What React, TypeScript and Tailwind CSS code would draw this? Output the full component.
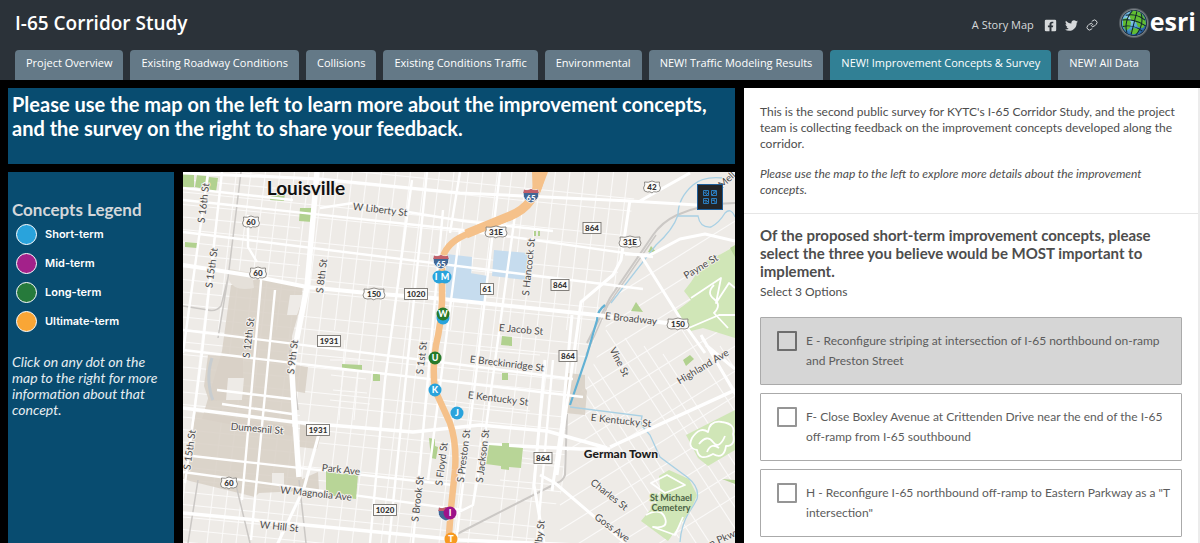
import React from "react";
import { FaFacebookSquare, FaTwitter } from "react-icons/fa";
import { Link as LinkIcon } from "lucide-react";

const tabs = [
  "Project Overview",
  "Existing Roadway Conditions",
  "Collisions",
  "Existing Conditions Traffic",
  "Environmental",
  "NEW! Traffic Modeling Results",
  "NEW! Improvement Concepts & Survey",
  "NEW! All Data",
];

const legend = [
  { label: "Short-term", color: "bg-[#29a3dc]" },
  { label: "Mid-term", color: "bg-[#a3218a]" },
  { label: "Long-term", color: "bg-[#267a3b]" },
  { label: "Ultimate-term", color: "bg-[#f9a636]" },
];

const options = [
  { id: "e", text: "E - Reconfigure striping at intersection of I-65 northbound on-ramp and Preston Street", hovered: true },
  { id: "f", text: "F- Close Boxley Avenue at Crittenden Drive near the end of the I-65 off-ramp from I-65 southbound", hovered: false },
  { id: "h", text: 'H - Reconfigure I-65 northbound off-ramp to Eastern Parkway as a "T intersection"', hovered: false },
];

function Globe() {
  return (
    <svg viewBox="0 0 32 32" className="size-8" aria-hidden="true">
      <defs>
        <radialGradient id="halo">
          <stop offset="0.78" stopColor="#c9cfd3" stopOpacity="0.85" />
          <stop offset="1" stopColor="#c9cfd3" stopOpacity="0" />
        </radialGradient>
        <radialGradient id="sea" cx="0.35" cy="0.3" r="0.8">
          <stop offset="0" stopColor="#a5dcf2" />
          <stop offset="0.55" stopColor="#4a9fd6" />
          <stop offset="1" stopColor="#1f4f94" />
        </radialGradient>
      </defs>
      <circle cx="16" cy="16" r="15.500" fill="url(#halo)" />
      <circle cx="16" cy="16" r="13" fill="#0e2130" />
      <circle cx="16" cy="16" r="12.200" fill="url(#sea)" />
      <path d="M14 4c5-1 11 2 13 8l1 5-3 4-5-1-2-5-5-2-2-5zM5 12l4-1 4 4-1 6-4 3-3-5zM15 21l6 1-1 4-5 1.500-3-3z" fill="#62bd32" />
      <g fill="none" stroke="#0e2130" strokeWidth="1" transform="rotate(14 16 16)">
        <path d="M6 10.500c6-3 14-3 20 0M4 16c7-3 17-3 24 0M6 22c6-3 14-3 20 0" />
        <path d="M16 4v24M11.500 5c-4 6-4 16 0 22M20.500 5c4 6 4 16 0 22" />
      </g>
    </svg>
  );
}

const minorH = Array.from({ length: 34 }, (_, i) => 142 + i * 12.500);
const minorV = Array.from({ length: 30 }, (_, i) => 196 + i * 14.500);

const streets: [string, number, number, number][] = [
  ["W Liberty St", 380, 210, 7],
  ["S 16th St", 204, 203, -83],
  ["S 15th St", 212, 268, -82],
  ["S 8th St", 322, 276, -83],
  ["S 12th St", 249, 338, -83],
  ["S 9th St", 293, 357, -83],
  ["S 15th St", 190, 450, -82],
  ["S 1st St", 422, 358, -83],
  ["S Hancock St", 529, 267, -84],
  ["E Jacob St", 521, 330, 5],
  ["E Breckinridge St", 507, 364, 7],
  ["E Kentucky St", 498, 399, 7],
  ["E Kentucky St", 621, 421, 6],
  ["E Broadway", 631, 319, 6],
  ["Payne St", 701, 267, -31],
  ["Highland Ave", 703, 367, -31],
  ["Vine St", 619, 362, 63],
  ["Dumesnil St", 257, 429, 5],
  ["Park Ave", 341, 470, 6],
  ["W Magnolia Ave", 316, 494, 6],
  ["W Hill St", 279, 527, 6],
  ["S Floyd St", 442, 464, -83],
  ["S Brook St", 418, 499, -83],
  ["S Preston St", 464, 456, -83],
  ["S Jackson St", 483, 456, -83],
  ["Charles St", 609, 495, 38],
  ["Goss Ave", 612, 528, 36],
  ["elby St", 540, 535, -83],
  ["Mell", 727, 180, -42],
  ["on Pkwy", 722, 539, -24],
];

const shields: [string, number, number, boolean][] = [
  ["60", 251, 222, true],
  ["60", 258, 273, true],
  ["150", 374, 294, true],
  ["1020", 416, 294, false],
  ["1931", 329, 341, false],
  ["1931", 318, 430, false],
  ["60", 229, 483, true],
  ["1020", 385, 510, false],
  ["31E", 496, 232, true],
  ["42", 652, 187, true],
  ["864", 592, 228, false],
  ["31E", 630, 242, true],
  ["864", 560, 285, false],
  ["61", 487, 289, false],
  ["150", 678, 324, true],
  ["864", 568, 356, false],
  ["864", 543, 458, false],
];

const dots: [string, number, number, string, number][] = [
  ["I", 439, 277, "#29a3dc", -3],
  ["M", 445, 277, "#29a3dc", 0],
  ["", 443, 318, "#29a3dc", 0],
  ["W", 443, 314, "#267a2b", 0],
  ["U", 435, 358, "#267a2b", 0],
  ["K", 435, 390, "#29a3dc", 0],
  ["J", 457, 413, "#29a3dc", 0],
  ["I", 450, 513, "#9c1289", 0],
  ["T", 451, 539, "#f79a22", 0],
];

function Interstate({ x, y, label }: { x: number; y: number; label?: string }) {
  return (
    <g transform={`translate(${x} ${y})`}>
      <path d="M-7-6.500q3.500 1.500 7-.5 3.500 2 7 .5 1.500 3 .5 7-1.500 4.500-7.500 6.500-6-2-7.500-6.500-1-4 .5-7z" fill="#416795" stroke="#fff" strokeWidth=".8" />
      <path d="M-7-6.500q3.500 1.500 7-.5 3.500 2 7 .5l.7 3.500h-15.400z" fill="#c2606a" />
      {label && <text y="5" textAnchor="middle" fontSize="8" fontWeight="900" fill="#fff">{label}</text>}
    </g>
  );
}

function StreetMap() {
  return (
    <svg
      viewBox="183 172 552 371"
      preserveAspectRatio="xMidYMin slice"
      className="block size-full font-[Lato,sans-serif]"
      role="img"
      aria-label="Street map of Louisville with improvement concepts along I-65"
    >
      <defs>
        <clipPath id="west">
          <path d="M183 172H640L612 300 590 350 566 400V480L540 543H183z" />
        </clipPath>
        <clipPath id="east">
          <path d="M640 205L735 215V543H545L566 475V425L600 350 612 300z" />
        </clipPath>
      </defs>
      <rect x="183" y="172" width="552" height="371" fill="#eeebe7" />

      <g fill="none" stroke="#fbfaf9" strokeWidth="1.100">
        <g clipPath="url(#west)">
          {minorH.map((y, i) => (
            <path key={`h${i}`} d={`M183 ${y}L${i % 3 === 0 ? 300 : 650} ${i % 3 === 0 ? y + 11 : y + 46}`} />
          ))}
          {minorV.map((x, i) => (
            <path key={`v${i}`} d={i % 4 === 1 ? `M${x + 26} 172L${x + 8} 330` : `M${x + 26} 172L${x - 18} 543`} />
          ))}
          <path d="M330 360h30M331 375l35 4M333 390l34 3M330 400l40 4M345 340l-6 80M360 350l-6 70M440 400l90 11M480 350l60 5M500 455l60 8M500 480l58 5" />
        </g>
        <g clipPath="url(#east)">
          {Array.from({ length: 12 }, (_, i) => (
            <path key={`e${i}`} d={`M${530 + i * 19} ${330 + (i % 4) * 8}l130 200`} />
          ))}
          {Array.from({ length: 12 }, (_, i) => (
            <path key={`f${i}`} d={`M560 ${330 + i * 25}l180 -112`} />
          ))}
        </g>
      </g>

      <g fill="#d8d0c6" fillOpacity=".88">
        <path d="M231 285l27-6 45 7-3 22-8 28v100l-42-8-48-9 20-68z" />
        <path d="M208 355l35 3v41l-34 2-5-15z" />
        <path d="M196 412l98 15 8 52 16-7 1 18-60 3-4 4-65-16-7-2z" />
        <path d="M295 365l13 2-3 26-11-2zM300 424l22 7-5 18-17-2z" />
        <path d="M568 373l17 2v13l2 3-2 24-20-2z" />
      </g>
      <path d="M229 280q5 12 25 8l-2-15-22-4z" fill="#e5e0d9" />
      <path d="M290 295h14l-7 20h-10zM228 378h16l-2 22h-16zM272 473h12v12h-12z" fill="#eeebe7" />
      <path d="M212 358q-4 12-3 24t4 18" fill="none" stroke="#c8cdd0" strokeWidth="3" />

      <g fill="#c6dcee">
        <path d="M446 254l26 3-2 45-24-3zM470 273l18 3-4 29-18-2zM494 250l34 3-2 27-34-4z" />
      </g>

      <g fill="#b1d18f">
        <path d="M183 173h11v14l-11 1zM197 175l10 1-2 13-10-2zM209 177l9 1-2 14-9-2z" />
        <path d="M271 193h14l-1 8-14-1zM300 208h13l-1 14-13-1zM185 242l12 1v5l-12-1z" />
        <path d="M342 364l20 1v6l-20-2zM373 374h7v7h-7z" />
        <path d="M429 438l6 1v7l3 1-2 12-5-1-1-10z" />
        <path d="M502 336l10 1v9l-11-1zM502 373h6v7h-6zM534 231h2v5h-2zM538 231h2v5h-2z" />
        <path d="M631 311l5-9 7 10zM651 246l6 7-9-1zM683 360l7-5 4 4-8 7z" />
      </g>
      <path d="M735 246l-14 8-17 8-13 20-7 9 7 9-16 12 16 19 12-3 32 10v-45zM686 435l49-25v40l-27 16-10-8zM659 476l10-6 20 9 8 16-6 15-9 12-14 19-27-20 20-24z" fill="#d0e6b7" />

      <g fill="none" stroke="#cbc8c5" strokeWidth="1.500">
        <path d="M241 172l-13 106-7 28q-5 6-13 4l-25-4M228 278l-10 60M290 350l8 60M299 480l7 63M236 485l14 58M198 480l-10 63" />
        <path d="M735 203q-30 0-58 12-15 7-24 20l-43 63-23 45M565 415l2 0-2 60q-2 6-8 8L457 534" strokeWidth="2" />
        <path d="M656 235l-48 70-22 50" />
      </g>

      <g fill="none" stroke="#a8d0e4" strokeWidth="1.300">
        <path d="M723 178q-20-2-30 7-15 13-15 30-5 15-22 30l-45 58" />
        <path d="M677 216q17 0 21 0 2 12 13 11 8-4 14-14 6-6 10 4" />
        <path d="M570 407l72 9q-2 8 1 11l7 8 10 22 27 20q13 10 10 22-4 8-8 13-8 14-9 30" />
      </g>
      <path d="M605 305q-8 6-8 15l-10 35-17 50" fill="none" stroke="#62b1d4" strokeWidth="2.200" />

      <g fill="none" stroke="#fff" strokeLinejoin="round">
        <g strokeWidth="2.400">
          <path d="M222 172l-20 181-17 130M208 172l-25 181M183 200l280 30 190 27M320 208l33-5 110 18 90 10M183 232l460 57M183 330l280 35 110 14M183 350l400 47M183 455l270 30M183 472l280 38M427 172l-38 371M443 210l-30 333M460 230l-32 250M412 180l-27 200-15 163M460 172l-10 61M500 172l-44 371M515 215l-30 220-12 70-20 10M553 360l-16 180" />
          <path d="M248 215v32l9 15M183 188l110 12M275 290l-24 250M262 270l-20 230M217 390l75 9M222 404l70 10" />
        </g>
        <path d="M183 173l137 6 140 14 170 8 67 4M630 200l-9 60-8 15-32 27-4 30-20 143M640 201l50-28M545 360l-11 125 10 58M572 315l-10 108-10 68M625 254l25 1 30-16 25-5 30 7M640 254l40 64 25 35M701 335l36 62M706 345l29 24M540 475l15 8 70 60" strokeWidth="3" />
        <path d="M183 265l64 10 60 12 60 6 66 5 164 17 70 8" strokeWidth="4" />
        <path d="M183 408l110 14 120 10 67-7 67 6 60 17M610 447l125-57M480 444l100 5h30M183 513l277 27 140 6" strokeWidth="3.500" />
        <path d="M317 172l-10 115-10 51-5 35 3 48 4 56" strokeWidth="5.500" />
        <path d="M320 430l-16 58-27 57" strokeWidth="3" />
        <path d="M691 298l30-20-5 25 13-20 6 5M684 330l35-15h16M714 285q-8 8 0 14t0 14l14 15M651 483l14 10 20-8-18-10zM646 515q15-8 19 3t-12 9l22 8 8-18" strokeWidth="1.800" />
        <path d="M692 438q8-12 16-6 2-12 14-10 14 2 11 12 3 12-7 12-2 14-13 8-14 8-16-4-10-2-5-12zM699 444q8-10 14-2t12-6M707 452q4-10 12-4" strokeWidth="1.800" />
      </g>

      <g fill="#b8d597">
        <path d="M326 471l32 4-2 24-30-4z" />
        <path d="M489 445l13 1v-3h7v4l14 1-2 20-12-1v3l-8-1v-3l-15-2zM722 479l13 1v4zM730 248l5-3v12z" />
      </g>

      <g fill="none" stroke="#f5c18a" strokeLinejoin="round" strokeLinecap="butt">
        <path d="M540 172q-2 17-9 28-7 10-21 17-20 8-40 16-25 9-28 28l0 40q-1 24-6 44-4 22-1 45l15 33q7 20 5 47l-4 38-3 40" strokeWidth="6.500" />
        <path d="M541 172q-3 20-11 29-6 9-20 15l-44 18" strokeWidth="9" />
      </g>
      <path d="M532 172h16l-10 26-5 4z" fill="#f5c18a" />

      <g fontSize="10" fill="#4c4c4c" stroke="#f4f1ee" strokeWidth="2" paintOrder="stroke" textAnchor="middle">
        {streets.map(([name, x, y, angle], i) => (
          <text key={i} transform={`translate(${x} ${y}) rotate(${angle})`} dy="3">{name}</text>
        ))}
        <text x="671" y="501" fontSize="9" fontWeight="700" fill="#4b6245" stroke="#d0e6b7">St Michael</text>
        <text x="671" y="511" fontSize="9" fontWeight="700" fill="#4b6245" stroke="#d0e6b7">Cemetery</text>
        <text x="621" y="458" fontSize="12" fontWeight="900" fill="#1c1c1c">German Town</text>
        <text x="306" y="195" fontSize="19" fontWeight="700" fill="#111">Louisville</text>
      </g>

      {shields.map(([n, x, y, us], i) => {
        const w = n.length * 5 + 5;
        return (
          <g key={i} transform={`translate(${x} ${y})`}>
            {us ? (
              <path
                d={`M${-w / 2} -5q${w / 4} 1 ${w / 2} -1q${w / 4} 2 ${w / 2} 1q-1 3 1 6q0 4 -4 4q-${w / 2 - 4} -1 -${w / 2 - 3} 1q-2 -2 -${w / 2 - 3} -1q-4 0 -4 -4q2 -3 1 -6z`}
                fill="#fbfaf8" stroke="#77736f" strokeWidth=".8"
              />
            ) : (
              <rect x={-w / 2 + 1} y="-5.500" width={w - 2} height="11" fill="#fbfaf8" stroke="#77736f" strokeWidth=".9" />
            )}
            <text y="3" textAnchor="middle" fontSize="8" fontWeight="900" fill="#333">{n}</text>
          </g>
        );
      })}
      <Interstate x={531} y={196} label="65" />
      <Interstate x={441} y={262} label="65" />
      <Interstate x={446} y={514} />
      {dots.map(([t, x, y, c, dx], i) => (
        <g key={i}>
          <circle cx={x} cy={y} r="6.500" fill={c} />
          <text x={x + dx} y={y + 3} textAnchor="middle" fontSize="9" fontWeight="900" fill="#fff">{t}</text>
        </g>
      ))}
    </svg>
  );
}

function BasemapIcon() {
  return (
    <svg viewBox="0 0 16 16" className="size-4" fill="none" stroke="#2b7dc0" strokeWidth="1" aria-hidden="true">
      <path d="M1.500 1.500h5v5h-5zM9.500 1.500h5v5h-5zM1.500 9.500h5v5h-5zM9.500 9.500h5v5h-5z" />
      <path d="M2 3.500l2 1V2M4 6l2-2M10 6l2-2 2-2M12 2v2h2M2 12l2-1 2 2M4 14v-3M10 11l3 1v2M12 10v2" />
    </svg>
  );
}

export default function App() {
  return (
    <div className="flex min-h-screen flex-col bg-black">
      <header className="flex flex-col bg-[#2b3239] font-['Open_Sans',sans-serif] text-white">
        <div className="flex h-[50px] items-center justify-between pr-1 pb-1 pl-[15px]">
          <h1 className="text-[19px] leading-6 font-semibold">I-65 Corridor Study</h1>
          <div className="flex items-center text-[#d6d9db]">
            <span className="pt-1 text-[11px]">A Story Map</span>
            <div className="flex items-center gap-2 pt-1 pl-[10px]">
              <a href="#facebook" aria-label="Share on Facebook"><FaFacebookSquare className="size-[13px]" /></a>
              <a href="#twitter" aria-label="Share on Twitter"><FaTwitter className="size-[13px]" /></a>
              <a href="#link" aria-label="Copy link"><LinkIcon className="size-3" /></a>
            </div>
            <a href="#esri" aria-label="esri" className="flex items-center pl-5 text-white">
              <Globe />
              <span className="pb-1 text-[25px] leading-7 font-bold">esri</span>
            </a>
          </div>
        </div>
        <nav className="flex gap-[7px] pl-[15px]">
          {tabs.map((tab, i) => (
            <button
              key={tab}
              type="button"
              className={`h-[30px] rounded-t-[4px] px-[11px] pb-1 text-[11px] whitespace-nowrap ${i === 6 ? "bg-[#318095]" : "bg-[#647987]"}`}
            >
              {tab}
            </button>
          ))}
        </nav>
      </header>

      <main className="flex flex-1 gap-[9px] pt-2 font-[Lato,sans-serif]">
        <div className="flex min-w-0 flex-1 flex-col gap-2 pl-2">
          <section className="h-[76px] bg-[#084c70] px-1 pt-1">
            <h2 className="text-xl leading-6 font-bold text-white">
              Please use the map on the left to learn more about the improvement concepts,
              <br />
              and the survey on the right to share your feedback.
            </h2>
          </section>
          <div className="flex min-h-0 flex-1 gap-[9px]">
            <aside className="w-[166px] shrink-0 bg-[#084c70] px-1 pt-[26px]">
              <h3 className="text-[17px] leading-6 font-bold text-[#d4d7da]">Concepts Legend</h3>
              <ul className="flex flex-col gap-[7px] pt-px pl-1 font-[Inter,sans-serif] text-[11px] font-semibold text-white">
                {legend.map((item) => (
                  <li key={item.label} className="flex h-[22px] items-center gap-2">
                    <span className={`size-[21px] rounded-full border border-white ${item.color}`} />
                    {item.label}
                  </li>
                ))}
              </ul>
              <p className="pt-[22px] text-sm leading-4 text-[#e6edf1] italic">
                Click on any dot on the map to the right for more information about that concept.
              </p>
            </aside>
            <section className="relative min-w-0 flex-1">
              <div className="absolute inset-0 overflow-hidden">
                <StreetMap />
              </div>
              <button
                type="button"
                aria-label="Basemap gallery"
                className="absolute top-3 right-3 flex size-[26px] items-center justify-center border border-[#1e5f9c] bg-[#222428]"
              >
                <BasemapIcon />
              </button>
            </section>
          </div>
        </div>

        <form className="w-[38%] shrink-0 border-r-2 border-[#ececec] bg-white text-[#4d4d4d]">
          <div className="flex flex-col gap-[14px] border-b border-[#e6e6e6] px-4 pt-4 pb-[15px] text-xs leading-4">
            <p>
              This is the second public survey for KYTC's I-65 Corridor Study, and the project team is collecting
              feedback on the improvement concepts developed along the corridor.
            </p>
            <p className="italic">Please use the map to the left to explore more details about the improvement concepts.</p>
          </div>
          <fieldset className="px-4 pt-3 pb-1">
            <legend className="contents">
              <span className="block text-[15px] leading-[18px] font-bold">
                Of the proposed short-term improvement concepts, please select the three you believe would be MOST
                important to implement.
              </span>
            </legend>
            <p className="pt-1 text-xs leading-4">Select 3 Options</p>
            <div className="flex flex-col gap-2 pt-[17px]">
              {options.map((o) => (
                <label
                  key={o.id}
                  htmlFor={o.id}
                  className={`flex h-[68px] gap-[9px] rounded-[1px] border border-[#aaaaaa] pt-[13px] pl-4 text-xs leading-5 text-[#5c5c5c] ${o.hovered ? "bg-[#d6d6d6]" : "bg-white"}`}
                >
                  <input
                    id={o.id}
                    type="checkbox"
                    className={`size-5 shrink-0 appearance-none rounded-[1px] border-2 checked:bg-[#318095] ${o.hovered ? "border-[#6e6e6e]" : "border-[#959595]"}`}
                  />
                  <span>{o.text}</span>
                </label>
              ))}
            </div>
          </fieldset>
        </form>
      </main>
    </div>
  );
}
